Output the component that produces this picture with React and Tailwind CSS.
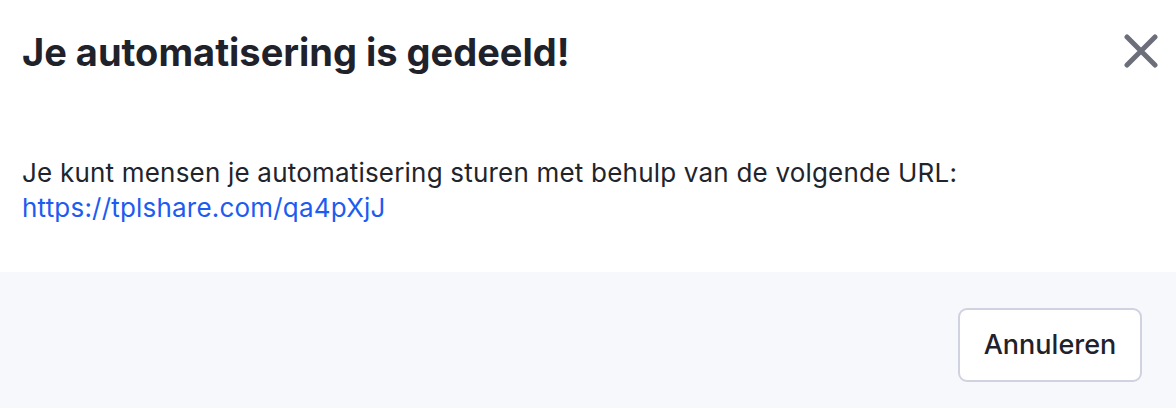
import React from 'react';

const ShareDialog = () => {
  return (
    <div className="w-[1176px] h-[408px] bg-white flex flex-col" style={{ fontFamily: 'Inter, "Noto Sans", sans-serif' }}>
      {/* Header */}
      <div className="flex items-start justify-between pl-[22px] pr-[15px] pt-[28px]">
        <h1 className="text-[38px] leading-[48px] font-bold text-[#1f222b]">
          Je automatisering is gedeeld!
        </h1>
        <button className="mt-[3px] w-[40px] h-[40px] flex items-center justify-center">
          <svg width="34" height="34" viewBox="0 0 34 34" fill="none">
            <path d="M3 3 L31 31 M31 3 L3 31" stroke="#6c6e7a" strokeWidth="5" strokeLinecap="round" />
          </svg>
        </button>
      </div>

      {/* Body */}
      <div className="pl-[22px] pt-[79px] text-[26px] leading-[35px] tracking-[0.2px] text-[#22242c]">
        <p>Je kunt mensen je automatisering sturen met behulp van de volgende URL:</p>
        <a className="text-[#1c5cf0]">https://tplshare.com/qa4pXjJ</a>
      </div>

      {/* Footer */}
      <div className="mt-auto h-[136px] bg-[#f7f8fc] flex items-center justify-end pr-[34px] pt-[10px]">
        <button className="w-[184px] h-[74px] bg-white border-2 border-[#d0d2e0] rounded-[9px] text-[27px] font-medium text-[#1f222b]">
          Annuleren
        </button>
      </div>
    </div>
  );
};

export default function App() {
  return <ShareDialog />;
}
